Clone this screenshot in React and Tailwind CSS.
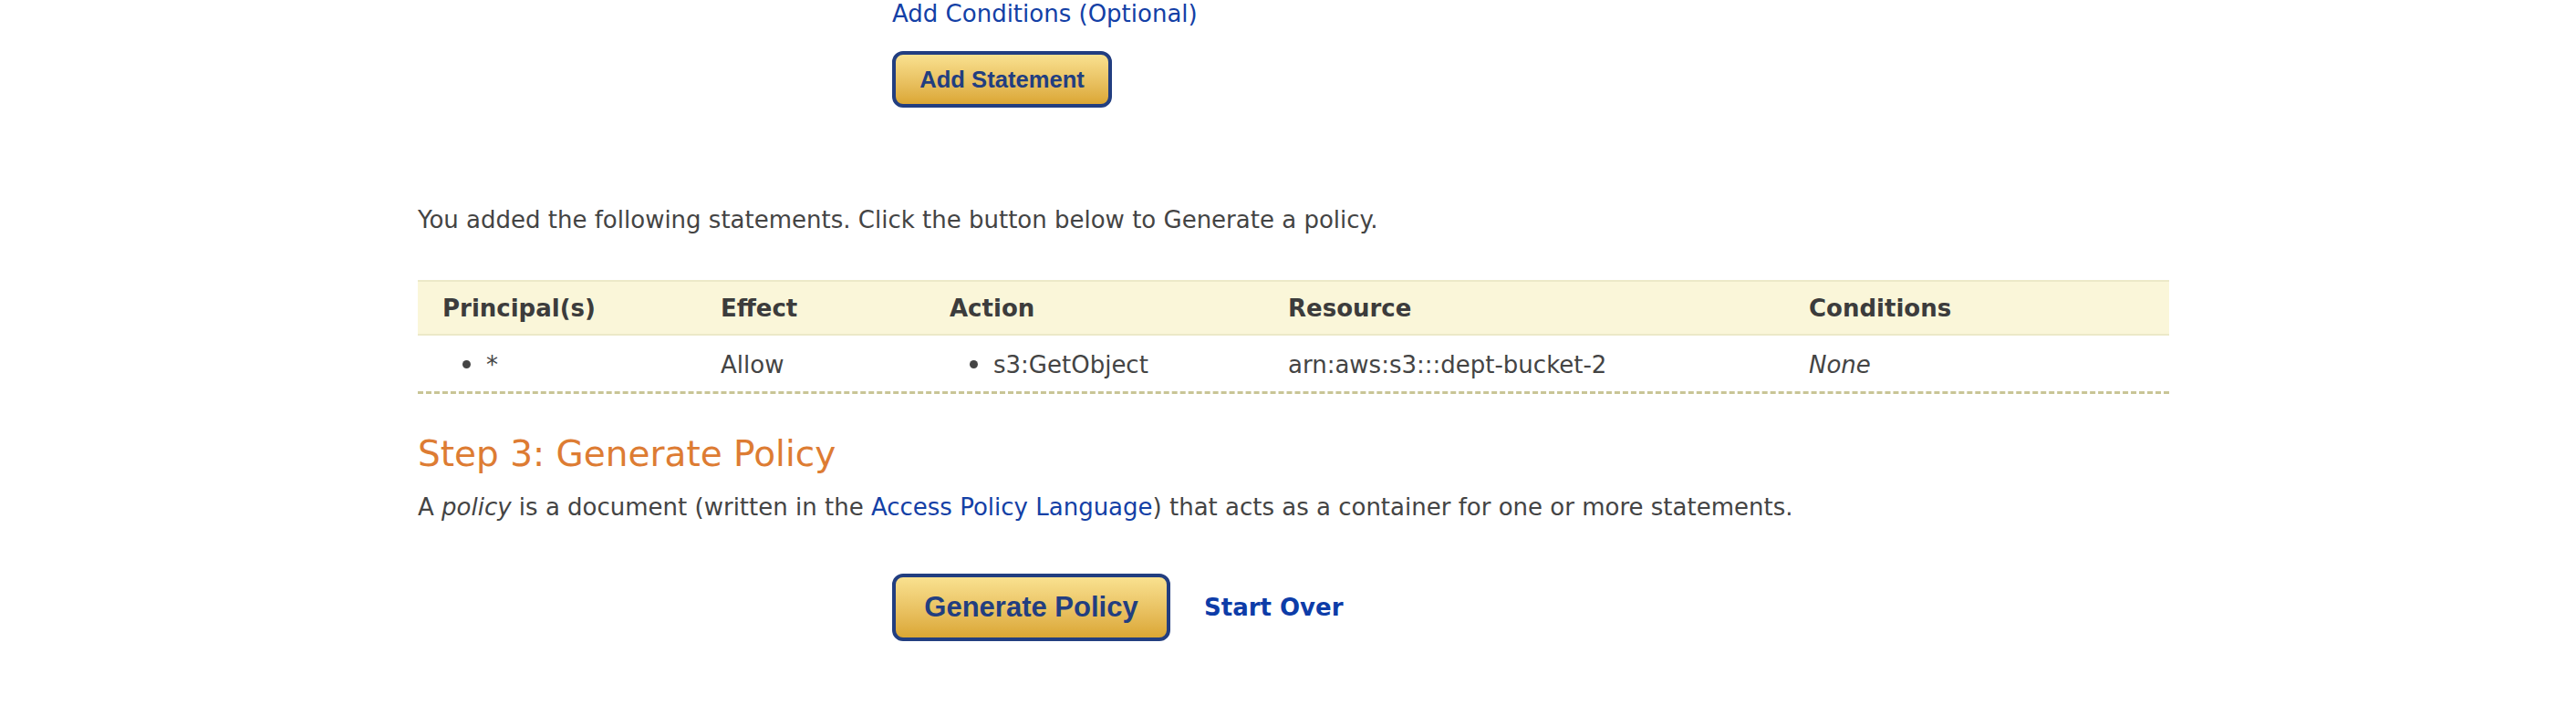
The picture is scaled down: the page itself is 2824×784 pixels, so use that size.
import React from 'react';

const columns = [
  { key: 'principal', label: 'Principal(s)', width: 'w-[305px]' },
  { key: 'effect', label: 'Effect', width: 'w-[251px]' },
  { key: 'action', label: 'Action', width: 'w-[371px]' },
  { key: 'resource', label: 'Resource', width: 'w-[571px]' },
  { key: 'conditions', label: 'Conditions', width: 'w-[422px]' },
];

function Bullet({ children }) {
  return (
    <div className="flex items-center">
      <span className="ml-[22px] mr-[17px] inline-block h-[9px] w-[9px] rounded-full bg-[#444]" />
      <span>{children}</span>
    </div>
  );
}

function GoldButton({ children, className }) {
  return (
    <button
      type="button"
      className={`flex items-center justify-center rounded-[12px] border-4 border-[#223e80] bg-gradient-to-b from-[#f9e18f] to-[#dba733] font-['Liberation_Sans',Arial,sans-serif] font-bold text-[#223e80] ${className}`}
    >
      {children}
    </button>
  );
}

export default function App() {
  return (
    <div className="min-h-[784px] w-[2824px] bg-white pl-[458px] font-['DejaVu_Sans',Verdana,sans-serif] text-[26px] leading-[30px] text-[#444]">
      {/* Step 2 tail */}
      <div className="pl-[520px]">
        <a href="#" className="text-[#1340a6]">
          Add Conditions (Optional)
        </a>
        <GoldButton className="mt-[26px] h-[62px] w-[241px] text-[25.6px]">Add Statement</GoldButton>
      </div>

      <p className="mt-[108px]">
        You added the following statements. Click the button below to Generate a policy.
      </p>

      {/* Statements table */}
      <div className="mt-[51px] w-[1920px]">
        <div className="flex h-[61px] items-center border-y-2 border-[#ece9c8] bg-[#faf6d9] font-bold text-[#3c3c3c]">
          {columns.map((c) => (
            <div key={c.key} className={`${c.width} pl-[27px]`}>
              {c.label}
            </div>
          ))}
        </div>
        <div className="flex h-[64px] items-center border-b-[3px] border-dashed border-[#c9c596] pt-[2px]">
          <div className="w-[305px] pl-[27px]">
            <Bullet>*</Bullet>
          </div>
          <div className="w-[251px] pl-[27px]">Allow</div>
          <div className="w-[371px] pl-[27px]">
            <Bullet>s3:GetObject</Bullet>
          </div>
          <div className="w-[571px] pl-[27px]">arn:aws:s3:::dept-bucket-2</div>
          <div className="w-[422px] pl-[27px] italic">None</div>
        </div>
      </div>

      {/* Step 3 */}
      <h2 className="mt-[43px] text-[39px] leading-[45px] text-[#dd7c33]">Step 3: Generate Policy</h2>
      <p className="mt-[21px]">
        A <em>policy</em> is a document (written in the{' '}
        <a href="#" className="text-[#1340a6]">
          Access Policy Language
        </a>
        ) that acts as a container for one or more statements.
      </p>

      <div className="mt-[58px] flex items-center pl-[520px]">
        <GoldButton className="h-[74px] w-[305px] text-[31px]">Generate Policy</GoldButton>
        <a href="#" className="ml-[37px] font-bold text-[#0d3ca8]">
          Start Over
        </a>
      </div>
    </div>
  );
}
